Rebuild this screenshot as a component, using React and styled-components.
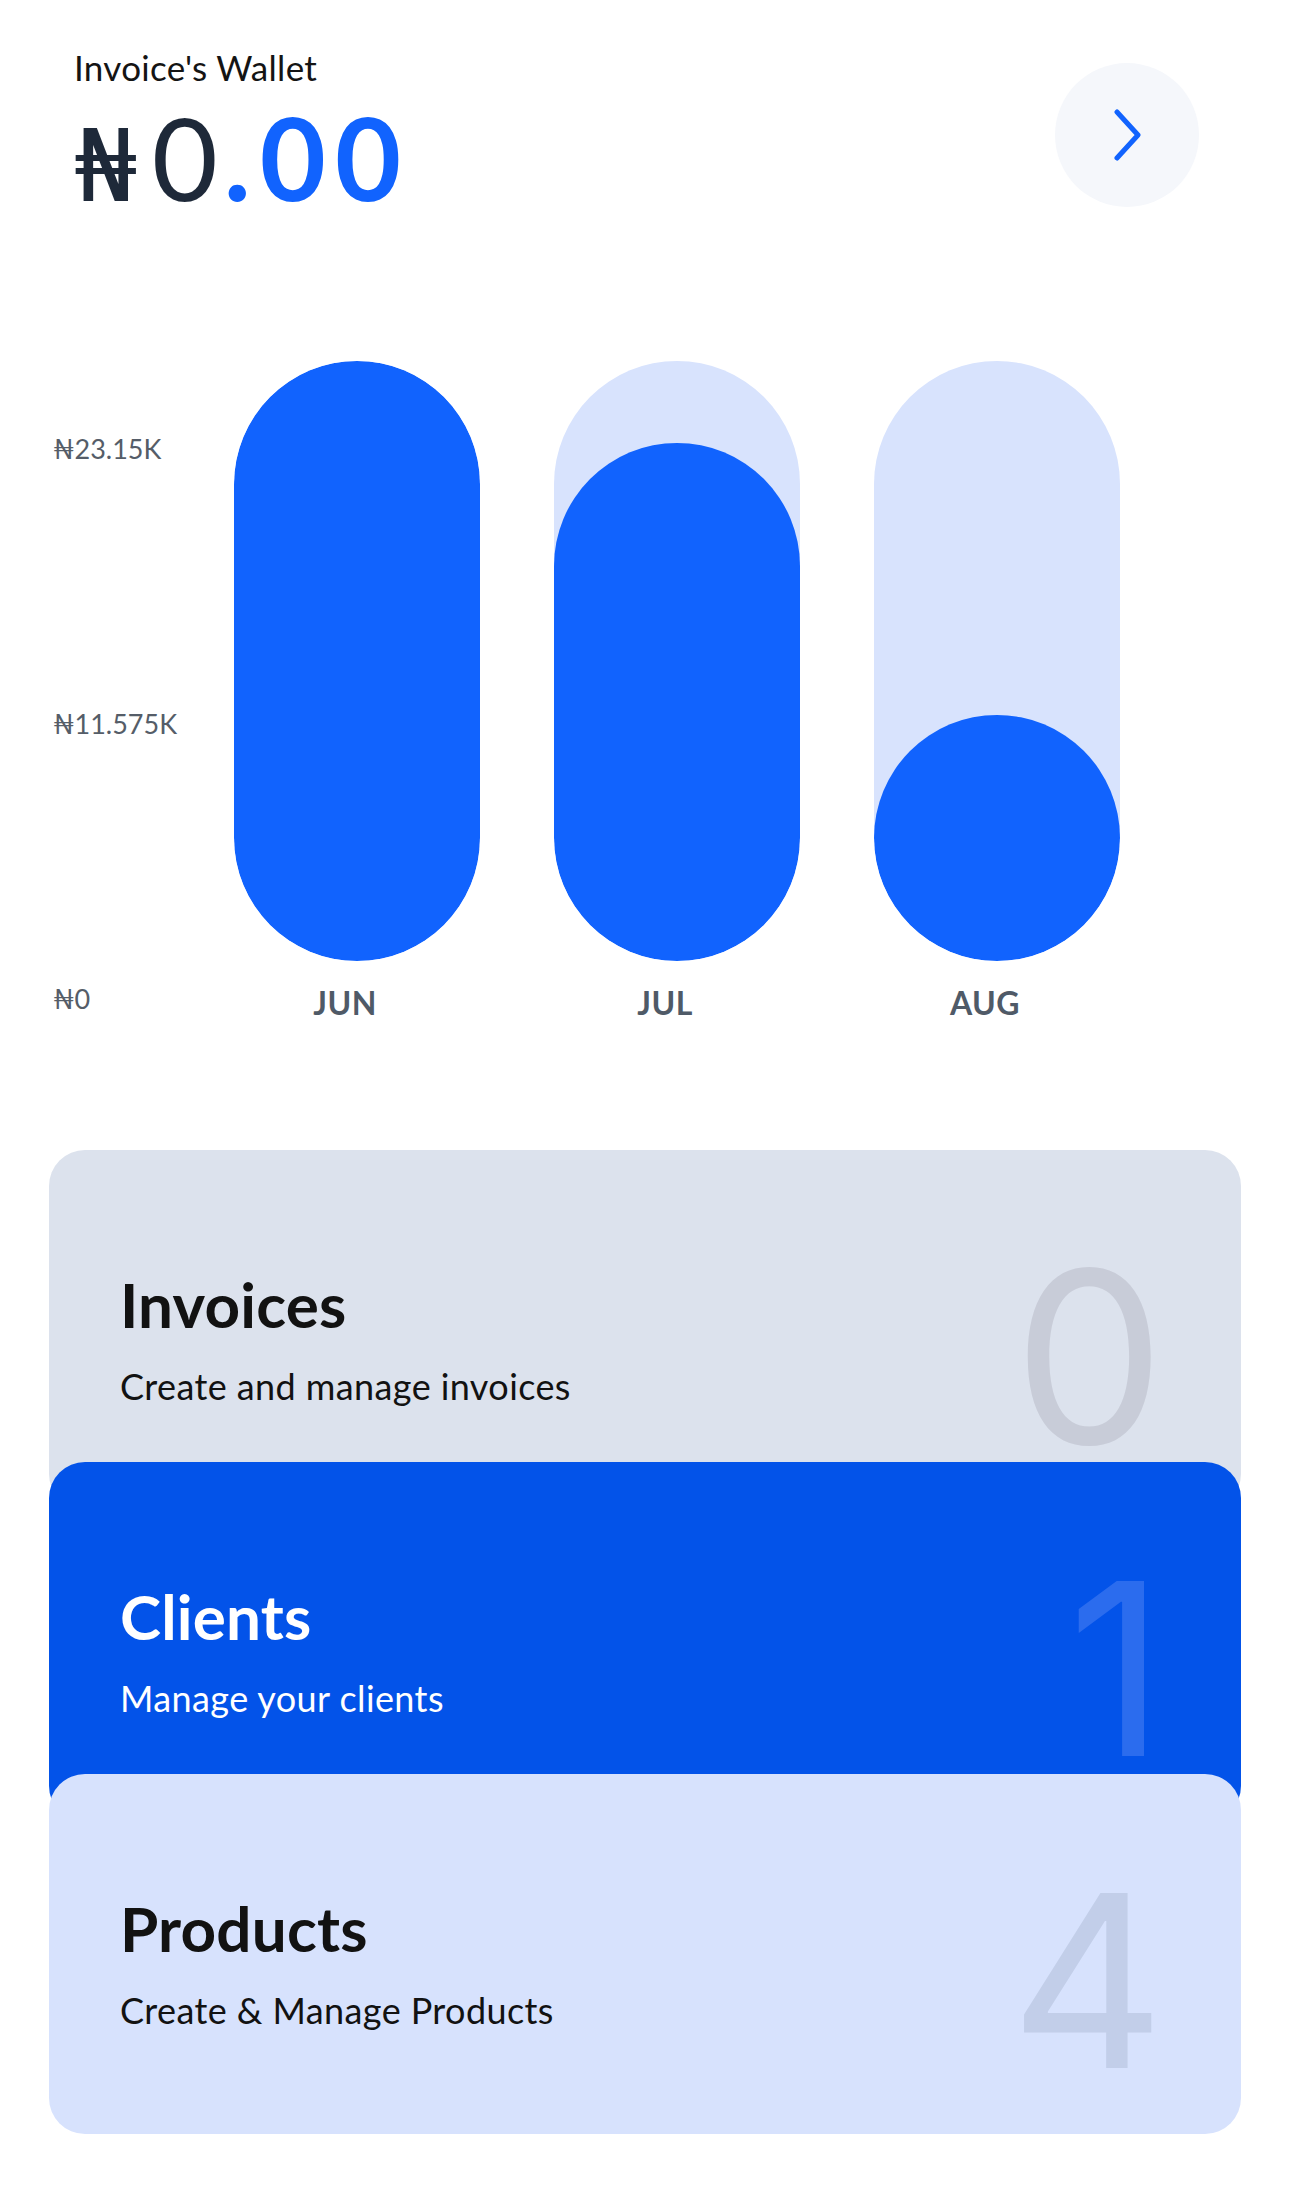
import React from "react";
import styled, { createGlobalStyle } from "styled-components";

const GlobalStyle = createGlobalStyle`
  * {
    box-sizing: border-box;
  }
  body {
    margin: 0;
    background: #ffffff;
    font-family: Lato, "Open Sans", "DejaVu Sans", sans-serif;
    color: #111111;
  }
`;

const months = [
  { label: "JUN", value: 100 },
  { label: "JUL", value: 86.3 },
  { label: "AUG", value: 0 },
];

const axis = ["₦23.15K", "₦11.575K", "₦0"];

const cards = [
  {
    title: "Invoices",
    text: "Create and manage invoices",
    count: 0,
    bg: "#dce2ed",
    ink: "#121212",
    digit: "#c8ccd8",
  },
  {
    title: "Clients",
    text: "Manage your clients",
    count: 1,
    bg: "#0353e9",
    ink: "#ffffff",
    digit: "#2b6cee",
  },
  {
    title: "Products",
    text: "Create & Manage Products",
    count: 4,
    bg: "#d7e2fd",
    ink: "#121212",
    digit: "#c2cee9",
  },
];

function App() {
  return (
    <>
      <GlobalStyle />
      <Page>
        <Header>
          <Wallet>
            <WalletLabel>Invoice's Wallet</WalletLabel>
            <Amount>
              <Naira>₦</Naira>
              <Whole>0</Whole>
              <Cents>.00</Cents>
            </Amount>
          </Wallet>
          <NextButton aria-label="open wallet">
            <svg width="32" height="52" viewBox="0 0 32 52" fill="none">
              <path
                d="M6 3 L27 26 L6 49"
                stroke="#1163fe"
                strokeWidth="5"
                strokeLinecap="round"
                strokeLinejoin="round"
              />
            </svg>
          </NextButton>
        </Header>

        <ChartRow>
          <YAxis>
            {axis.map((a) => (
              <AxisLabel key={a}>{a}</AxisLabel>
            ))}
          </YAxis>
          <Bars>
            {months.map((m) => (
              <BarCol key={m.label}>
                <Track>
                  <Fill style={{ height: `${m.value}%` }} />
                </Track>
                <MonthLabel>{m.label}</MonthLabel>
              </BarCol>
            ))}
          </Bars>
        </ChartRow>

        <CardStack>
          {cards.map((c) => (
            <Card key={c.title} $bg={c.bg}>
              <CardText>
                <CardTitle $ink={c.ink}>{c.title}</CardTitle>
                <CardSub $ink={c.ink}>{c.text}</CardSub>
              </CardText>
              <CardCount $ink={c.digit}>{c.count}</CardCount>
            </Card>
          ))}
        </CardStack>
      </Page>
    </>
  );
}

const Page = styled.div`
  width: 1290px;
  min-height: 2205px;
  background: #ffffff;
  padding-bottom: 70px;
`;

const Header = styled.div`
  display: flex;
  justify-content: space-between;
  align-items: flex-start;
  padding: 46px 91px 0 74px;
`;

const Wallet = styled.div`
  display: flex;
  flex-direction: column;
`;

const WalletLabel = styled.div`
  font-size: 35px;
  line-height: 1.2;
  color: #141414;
  letter-spacing: 0.3px;
`;

const Amount = styled.div`
  margin-top: 12px;
  font-size: 114px;
  line-height: 1;
  display: flex;
  align-items: baseline;
`;

const Naira = styled.span`
  color: #1e2939;
  font-weight: 400;
  margin-right: 14px;
  font-family: "DejaVu Sans", Lato, sans-serif;
  font-size: 100px;
`;

const Whole = styled.span`
  color: #1e2939;
  font-weight: 400;
  margin-right: 6px;
`;

const Cents = styled.span`
  color: #1163fe;
  font-weight: 700;
  letter-spacing: 9px;
`;

const NextButton = styled.button`
  margin-top: 17px;
  width: 144px;
  height: 144px;
  border: none;
  border-radius: 50%;
  background: #f5f7fb;
  display: flex;
  justify-content: center;
  align-items: center;
  padding: 0;
  cursor: pointer;
`;

const ChartRow = styled.div`
  display: flex;
  align-items: flex-start;
  margin-top: 144px;
  padding-left: 53px;
`;

const YAxis = styled.div`
  width: 181px;
  height: 586px;
  margin-top: 70px;
  display: flex;
  flex-direction: column;
  justify-content: space-between;
`;

const AxisLabel = styled.div`
  font-size: 27px;
  line-height: 36px;
  color: #555d68;
  white-space: nowrap;
`;

const Bars = styled.div`
  display: flex;
  gap: 74px;
`;

const BarCol = styled.div`
  display: flex;
  flex-direction: column;
  align-items: center;
`;

const Track = styled.div`
  width: 246px;
  height: 600px;
  border-radius: 123px;
  background: #d8e3fd;
  display: flex;
  flex-direction: column;
  justify-content: flex-end;
  overflow: hidden;
`;

const Fill = styled.div`
  width: 100%;
  min-height: 246px;
  border-radius: 123px;
  background: #1163fe;
`;

const MonthLabel = styled.div`
  margin-top: 23px;
  padding-right: 24px;
  font-size: 32px;
  line-height: 38px;
  font-weight: 700;
  color: #4f5a67;
  letter-spacing: 0.5px;
`;

const CardStack = styled.div`
  margin-top: 128px;
  padding: 0 49px;
  display: flex;
  flex-direction: column;
`;

const Card = styled.div`
  position: relative;
  height: 360px;
  border-radius: 36px;
  background: ${(p) => p.$bg};
  display: flex;
  justify-content: space-between;
  align-items: flex-start;
  padding: 117px 76px 0 71px;

  & + & {
    margin-top: -48px;
  }
`;

const CardText = styled.div`
  display: flex;
  flex-direction: column;
`;

const CardTitle = styled.div`
  font-size: 62px;
  line-height: 1.2;
  font-weight: 700;
  color: ${(p) => p.$ink};
  letter-spacing: 0.2px;
`;

const CardSub = styled.div`
  margin-top: 24px;
  font-size: 36px;
  line-height: 1.2;
  color: ${(p) => p.$ink};
  letter-spacing: 0.4px;
`;

const CardCount = styled.div`
  margin-top: -30px;
  font-family: Inter, Lato, sans-serif;
  font-size: 240px;
  line-height: 1;
  font-weight: 400;
  color: ${(p) => p.$ink};
`;

export default App;
